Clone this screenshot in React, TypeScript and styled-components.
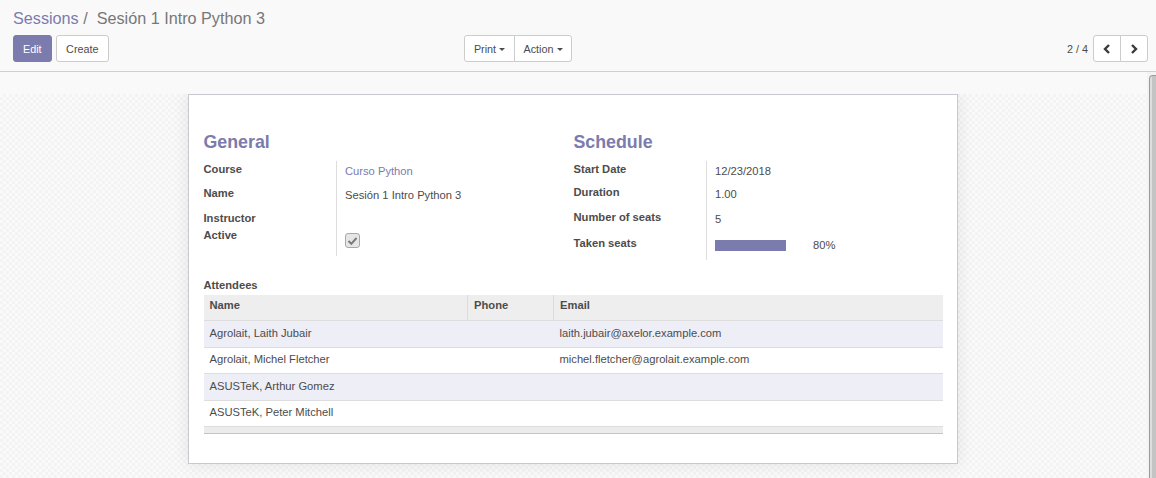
import React from "react";
import styled, { createGlobalStyle, css } from "styled-components";

const Global = createGlobalStyle`
  html, body { margin: 0; padding: 0; }
  body {
    font-family: "Liberation Sans", Arial, sans-serif;
    color: #4c4c4c;
    background: #f9f9f9;
    font-size: 11.2px;
  }
  * { box-sizing: border-box; }
`;

const Page = styled.div`
  width: 1156px;
  height: 478px;
  display: flex;
  flex-direction: column;
  overflow: hidden;
`;

/* ---------- control panel ---------- */
const ControlPanel = styled.div`
  height: 72px;
  flex: 0 0 72px;
  background: #f9f9f9;
  border-bottom: 1px solid #cfcfcf;
  padding: 9.8px 8px 0 13px;
`;

const Breadcrumb = styled.ol`
  margin: 0 0 7.7px;
  padding: 0;
  list-style: none;
  display: flex;
  font-size: 16.2px;
  line-height: 17.8px;
  height: 17.8px;
`;

const Crumb = styled.li<{ $active?: boolean }>`
  color: ${(p) => (p.$active ? "#777" : "#7c7bad")};
  white-space: pre;
`;

const CrumbSep = styled.li`
  color: #777;
  white-space: pre;
  padding: 0 4.5px;
`;

const CpBottom = styled.div`
  display: flex;
  align-items: center;
  height: 26.5px;
`;

const CpLeft = styled.div`
  flex: 0 0 559px;
  display: flex;
  justify-content: space-between;
  align-items: center;
`;

const CpRight = styled.div`
  flex: 1;
  display: flex;
  justify-content: flex-end;
  align-items: center;
  gap: 5px;
`;

const ButtonRow = styled.div`
  display: flex;
  gap: 4.5px;
`;

const Btn = styled.button<{ $primary?: boolean }>`
  font-family: inherit;
  font-size: 10.8px;
  height: 26.5px;
  padding: 0 9px;
  border-radius: 3px;
  display: inline-flex;
  align-items: center;
  cursor: pointer;
  ${(p) =>
    p.$primary
      ? css`
          background: #7c7bad;
          border: 1px solid #7c7bad;
          color: #fff;
        `
      : css`
          background: #fff;
          border: 1px solid #ccc;
          color: #4c4c4c;
        `}
`;

const Group = styled.div`
  display: flex;
  & > button + button {
    margin-left: -1px;
  }
  & > button:first-child {
    border-radius: 3px 0 0 3px;
  }
  & > button:last-child {
    border-radius: 0 3px 3px 0;
  }
`;

const GroupBtn = styled.button<{ $w?: number }>`
  font-family: inherit;
  font-size: 10.8px;
  height: 26.5px;
  ${(p) => (p.$w ? `width: ${p.$w}px;` : "")}
  padding: 0;
  background: #fff;
  border: 1px solid #ccc;
  color: #4c4c4c;
  display: inline-flex;
  align-items: center;
  justify-content: center;
  cursor: pointer;
`;

const Caret = styled.span`
  display: inline-block;
  width: 0;
  height: 0;
  margin-left: 3px;
  margin-top: 1px;
  border-top: 3.5px solid #4c4c4c;
  border-left: 3px solid transparent;
  border-right: 3px solid transparent;
`;

const PagerText = styled.span`
  font-size: 10.8px;
  color: #4c4c4c;
`;

/* ---------- body ---------- */
const Body = styled.div`
  flex: 1;
  display: flex;
  min-height: 0;
`;

const Main = styled.div`
  flex: 1;
  display: flex;
  flex-direction: column;
  min-width: 0;
`;

const Strip = styled.div`
  flex: 0 0 22px;
  background: #f9f9f9;
`;

const SheetBg = styled.div`
  flex: 1;
  padding-right: 1px;
  background-color: #fafafa;
  background-image: conic-gradient(
    #f3f3f3 25%,
    transparent 0 50%,
    #f3f3f3 0 75%,
    transparent 0
  );
  background-size: 6px 6px;
  overflow: hidden;
`;

const Sheet = styled.div`
  width: 770px;
  margin: 0 auto;
  background: #fff;
  border: 1px solid #c8c8d3;
  box-shadow: 0 0 16px rgba(0, 0, 0, 0.09);
  padding: 38.3px 14.5px 28.7px 14.5px;
`;

const Groups = styled.div`
  display: grid;
  grid-template-columns: 370px 370px;
`;

const GroupCol = styled.div``;

const GroupTitle = styled.div`
  font-size: 17.8px;
  line-height: 19.6px;
  font-weight: bold;
  color: #7c7bad;
  margin-bottom: 8px;
`;

const FieldRow = styled.div<{ $h: number }>`
  display: grid;
  grid-template-columns: 133.5px 1fr;
  height: ${(p) => p.$h}px;
`;

const Label = styled.div`
  border-right: 1px solid #ddd;
  font-weight: bold;
  line-height: 17px;
  color: #4c4c4c;
`;

const Value = styled.div<{ $pt?: number }>`
  padding-left: 8px;
  padding-top: ${(p) => p.$pt ?? 2}px;
  line-height: 17px;
  display: flex;
  align-items: flex-start;
`;

const Link = styled.a`
  color: #7c7bad;
  text-decoration: none;
`;

const CheckBox = styled.span`
  width: 15px;
  height: 15px;
  border: 1px solid #a8a8a8;
  border-radius: 3px;
  background: #e6e6e6;
  display: inline-flex;
  align-items: center;
  justify-content: center;
`;

const ProgressTrack = styled.div`
  width: 89px;
  height: 10.7px;
  margin-top: 3.4px;
  margin-right: 9px;
`;

const ProgressFill = styled.div`
  height: 100%;
  background: #7c7bad;
`;

const SectionLabel = styled.div`
  margin-top: 16.7px;
  font-weight: bold;
  line-height: 17px;
  margin-bottom: 1.4px;
`;

const Table = styled.table`
  width: 100%;
  border-collapse: collapse;
  table-layout: fixed;
  line-height: 17px;
`;

const Th = styled.th`
  background: #eee;
  text-align: left;
  font-weight: bold;
  height: 26px;
  padding: 2px 6px 0;
  vertical-align: top;
  border-bottom: 1px solid #ddd;
  & + & {
    border-left: 1px solid #dcdcdc;
  }
`;

const Tr = styled.tr<{ $odd: boolean }>`
  background: ${(p) => (p.$odd ? "#eeeef6" : "#fff")};
  border-bottom: 1px solid #ddd;
`;

const Td = styled.td`
  height: 26.5px;
  padding: 0 6px 5.2px;
  vertical-align: bottom;
  white-space: nowrap;
`;

const FootRow = styled.tr`
  background: #ececec;
  border-bottom: 1px solid #c4c4c4;
`;

const FootCell = styled.td`
  height: 7px;
  padding: 0;
`;

/* ---------- scrollbar ---------- */
const ScrollTrack = styled.div`
  flex: 0 0 9px;
  background: #f3f3f3;
  padding: 3px 0 0 2px;
  display: flex;
`;

const ScrollThumb = styled.div`
  flex: 1;
  border-left: 1px solid #9a9a9a;
  border-top: 1px solid #9a9a9a;
  border-radius: 4px 0 0 0;
  background: linear-gradient(to right, #dedede 0 40%, #c4c4c4 40%);
`;

const Chevron = ({ dir }: { dir: "left" | "right" }) => (
  <svg width="8" height="10" viewBox="0 0 8 10">
    <path
      d={dir === "left" ? "M6 1 L2 5 L6 9" : "M2 1 L6 5 L2 9"}
      fill="none"
      stroke="#3a3a3a"
      strokeWidth="2.4"
    />
  </svg>
);

const Check = () => (
  <svg width="11" height="10" viewBox="0 0 11 10">
    <path d="M1.5 5 L4.3 7.8 L9.5 2" fill="none" stroke="#7a7a7a" strokeWidth="2" />
  </svg>
);

const attendees = [
  { name: "Agrolait, Laith Jubair", phone: "", email: "laith.jubair@axelor.example.com" },
  { name: "Agrolait, Michel Fletcher", phone: "", email: "michel.fletcher@agrolait.example.com" },
  { name: "ASUSTeK, Arthur Gomez", phone: "", email: "" },
  { name: "ASUSTeK, Peter Mitchell", phone: "", email: "" },
];

export default function App() {
  return (
    <>
      <Global />
      <Page>
        <ControlPanel>
          <Breadcrumb>
            <Crumb>Sessions</Crumb>
            <CrumbSep>/ </CrumbSep>
            <Crumb $active>Sesión 1 Intro Python 3</Crumb>
          </Breadcrumb>
          <CpBottom>
            <CpLeft>
              <ButtonRow>
                <Btn $primary>Edit</Btn>
                <Btn>Create</Btn>
              </ButtonRow>
              <Group>
                <GroupBtn $w={51}>
                  Print
                  <Caret />
                </GroupBtn>
                <GroupBtn $w={58}>
                  Action
                  <Caret />
                </GroupBtn>
              </Group>
            </CpLeft>
            <CpRight>
              <PagerText>2 / 4</PagerText>
              <Group>
                <GroupBtn $w={28}>
                  <Chevron dir="left" />
                </GroupBtn>
                <GroupBtn $w={28}>
                  <Chevron dir="right" />
                </GroupBtn>
              </Group>
            </CpRight>
          </CpBottom>
        </ControlPanel>
        <Body>
          <Main>
            <Strip />
            <SheetBg>
              <Sheet>
                <Groups>
                  <GroupCol>
                    <GroupTitle>General</GroupTitle>
                    <FieldRow $h={24}>
                      <Label>Course</Label>
                      <Value>
                        <Link href="#">Curso Python</Link>
                      </Value>
                    </FieldRow>
                    <FieldRow $h={24.7}>
                      <Label>Name</Label>
                      <Value>Sesión 1 Intro Python 3</Value>
                    </FieldRow>
                    <FieldRow $h={17}>
                      <Label>Instructor</Label>
                      <Value />
                    </FieldRow>
                    <FieldRow $h={29}>
                      <Label>Active</Label>
                      <Value $pt={6.7}>
                        <CheckBox>
                          <Check />
                        </CheckBox>
                      </Value>
                    </FieldRow>
                  </GroupCol>
                  <GroupCol>
                    <GroupTitle>Schedule</GroupTitle>
                    <FieldRow $h={23.5}>
                      <Label>Start Date</Label>
                      <Value>12/23/2018</Value>
                    </FieldRow>
                    <FieldRow $h={25}>
                      <Label>Duration</Label>
                      <Value>1.00</Value>
                    </FieldRow>
                    <FieldRow $h={25.3}>
                      <Label>Number of seats</Label>
                      <Value>5</Value>
                    </FieldRow>
                    <FieldRow $h={25.2}>
                      <Label>Taken seats</Label>
                      <Value>
                        <ProgressTrack>
                          <ProgressFill style={{ width: "80%" }} />
                        </ProgressTrack>
                        80%
                      </Value>
                    </FieldRow>
                  </GroupCol>
                </Groups>
                <SectionLabel>Attendees</SectionLabel>
                <Table>
                  <colgroup>
                    <col style={{ width: 264 }} />
                    <col style={{ width: 86 }} />
                    <col />
                  </colgroup>
                  <thead>
                    <tr>
                      <Th>Name</Th>
                      <Th>Phone</Th>
                      <Th>Email</Th>
                    </tr>
                  </thead>
                  <tbody>
                    {attendees.map((a, i) => (
                      <Tr key={a.name} $odd={i % 2 === 0}>
                        <Td>{a.name}</Td>
                        <Td>{a.phone}</Td>
                        <Td>{a.email}</Td>
                      </Tr>
                    ))}
                  </tbody>
                  <tfoot>
                    <FootRow>
                      <FootCell />
                      <FootCell />
                      <FootCell />
                    </FootRow>
                  </tfoot>
                </Table>
              </Sheet>
            </SheetBg>
          </Main>
          <ScrollTrack>
            <ScrollThumb />
          </ScrollTrack>
        </Body>
      </Page>
    </>
  );
}
